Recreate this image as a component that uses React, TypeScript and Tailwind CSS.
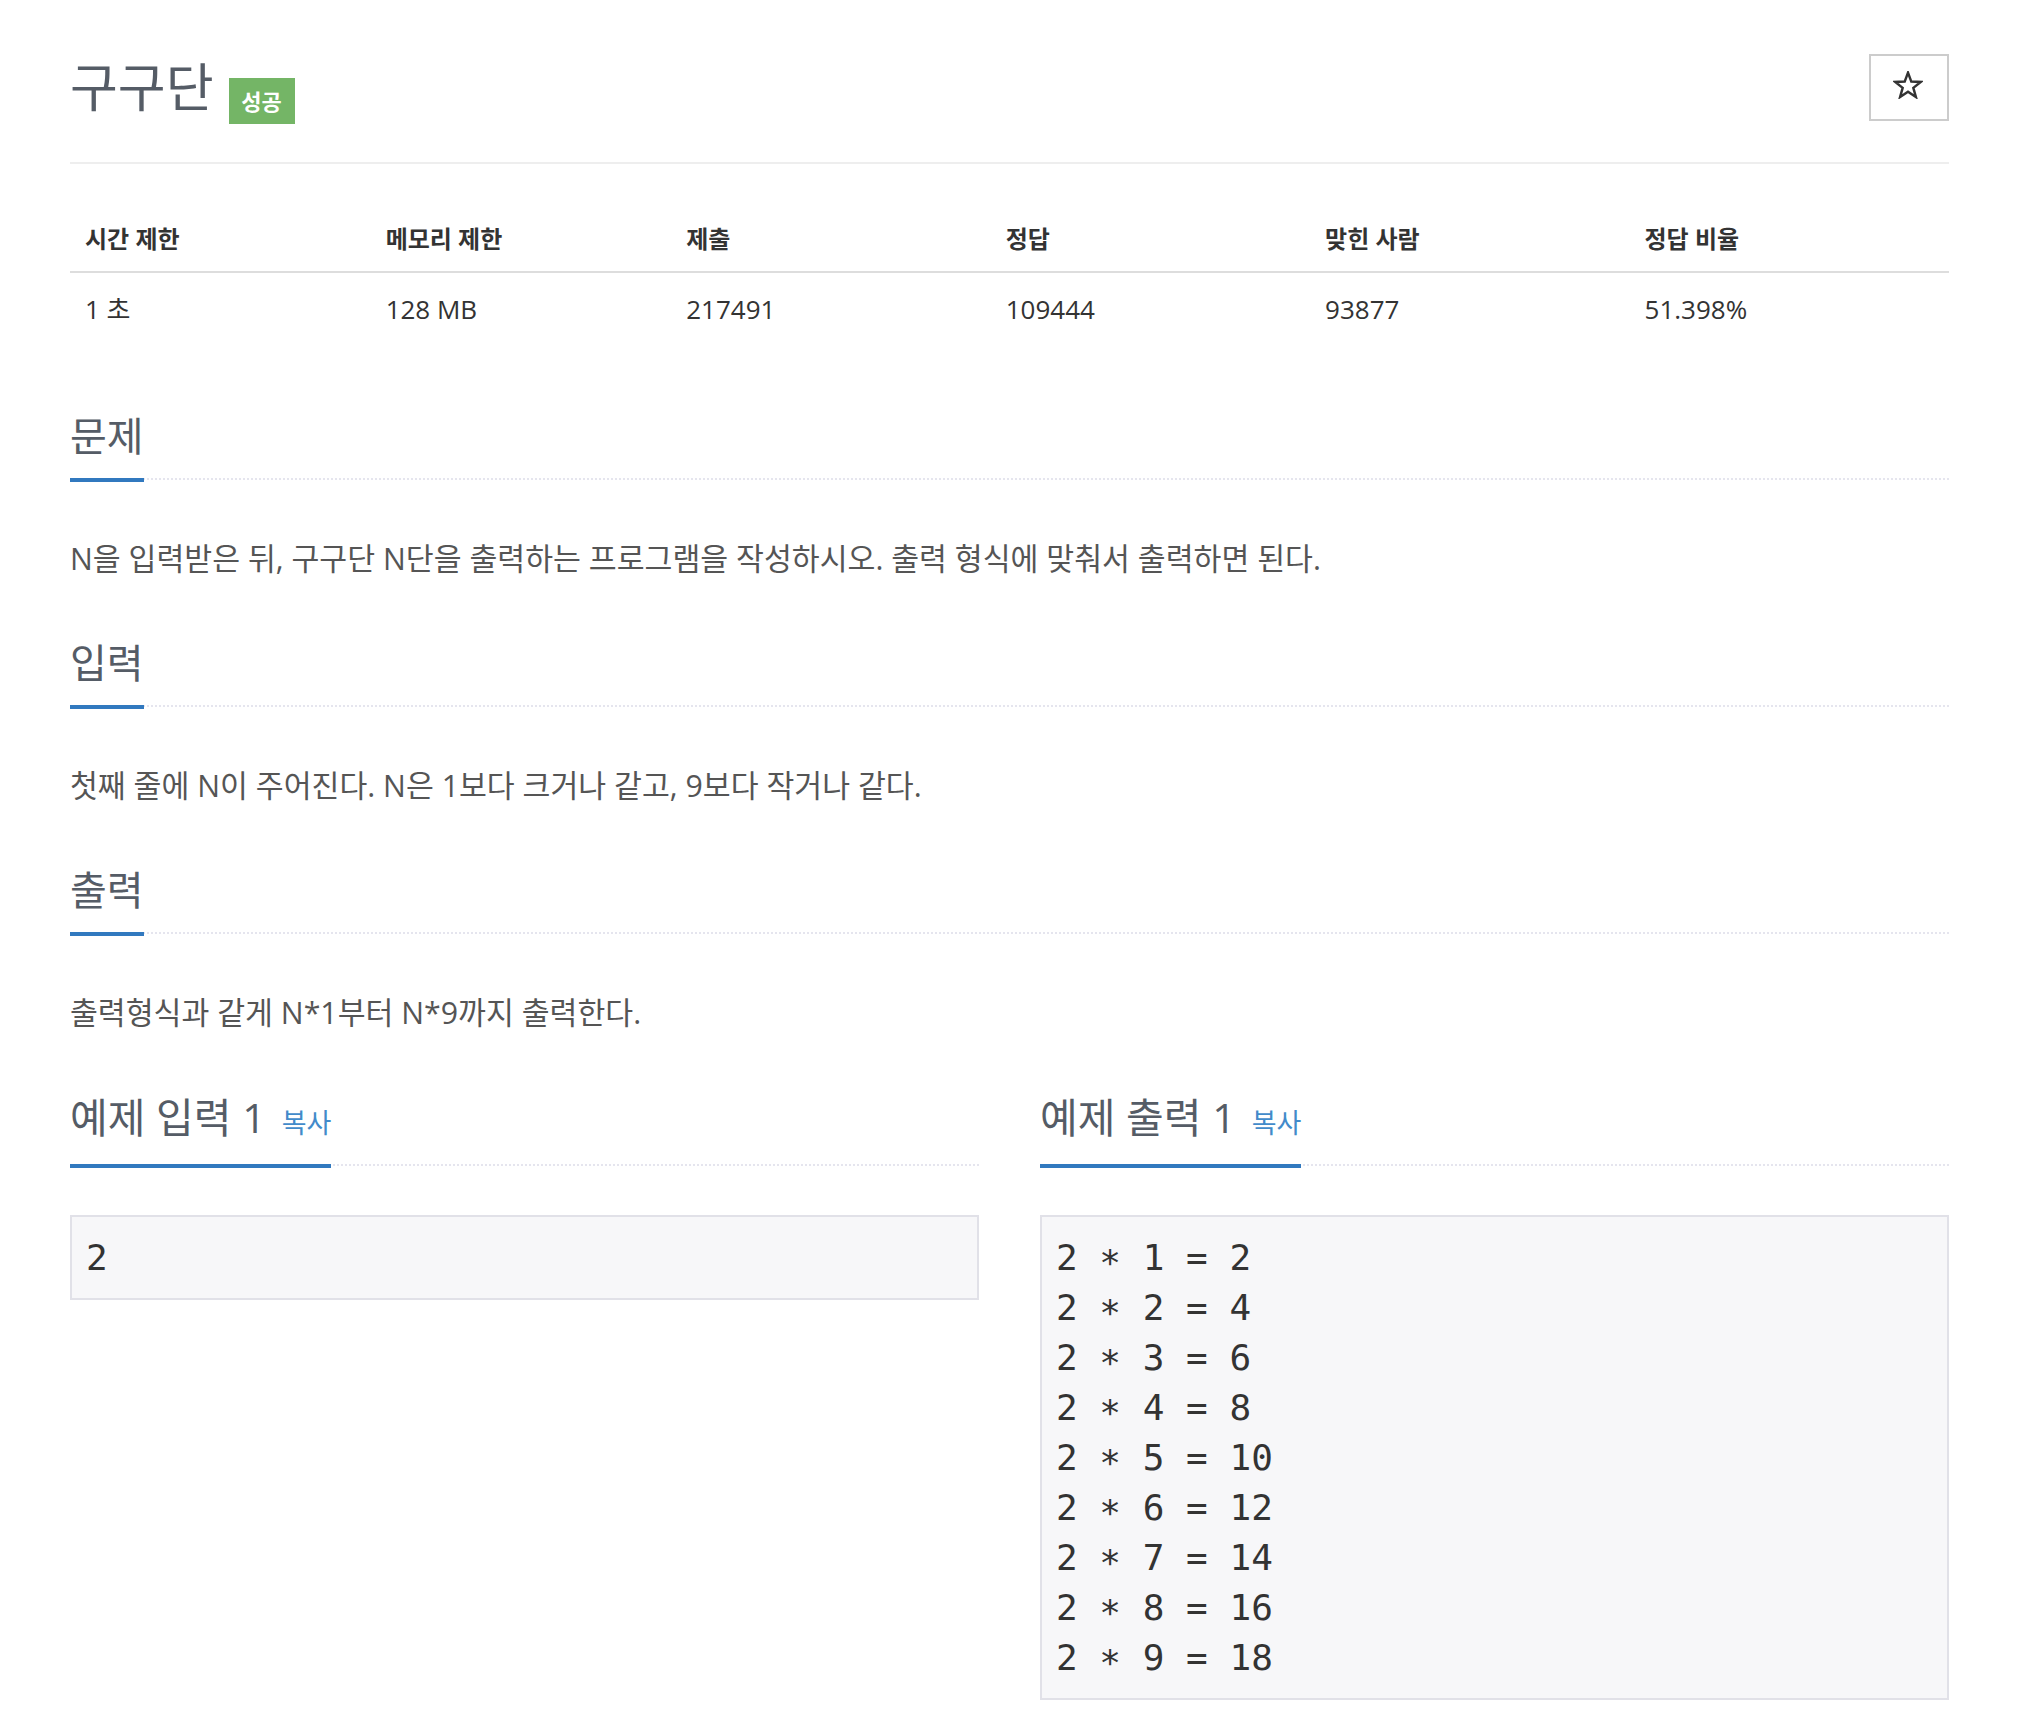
import type { ReactNode } from 'react';

// Problem page: 구구단 (BOJ style)

const infoHeaders = ['시간 제한', '메모리 제한', '제출', '정답', '맞힌 사람', '정답 비율'];
const infoValues = ['1 초', '128 MB', '217491', '109444', '93877', '51.398%'];
const colWidths = ['w-[16%]', 'w-[16%]', 'w-[17%]', 'w-[17%]', 'w-[17%]', 'w-[17%]'];

const multipliers = [1, 2, 3, 4, 5, 6, 7, 8, 9];

function StarIcon() {
  return (
    <svg width="30" height="28" viewBox="-1 -1 26 25" fill="none">
      <polygon
        points="12,0.5 14.94,8.45 23.41,8.79 16.76,14.05 19.05,22.21 12,17.5 4.95,22.21 7.24,14.05 0.59,8.79 9.06,8.45"
        stroke="#333333"
        strokeWidth="2.2"
        strokeLinejoin="miter"
      />
    </svg>
  );
}

function Section({ title, children }: { title: string; children: ReactNode }) {
  return (
    <section>
      <div className="flex border-b-2 border-dotted border-[#e5e5ee]">
        <h2 className="-mb-[4px] border-b-4 border-[#3179bf] pb-[17px] text-[40px] leading-[50px] font-normal text-[#555c66]">
          {title}
        </h2>
      </div>
      <p className="mt-[59px] mb-[59px] text-[30.3px] leading-[40px] text-[#555555]">{children}</p>
    </section>
  );
}

function Sample({ title, children }: { title: string; children: ReactNode }) {
  return (
    <div>
      <div className="flex border-b-2 border-dotted border-[#e5e5ee]">
        <h2 className="-mb-[4px] flex items-baseline border-b-4 border-[#3179bf] pb-[16px] text-[41px] leading-[50px] font-normal text-[#555c66]">
          {title}
          <span className="ml-[16px] text-[27px] text-[#428bca]">복사</span>
        </h2>
      </div>
      <pre className="m-0 mt-[49px] border-2 border-[#e1e1e8] bg-[#f7f7f9] pt-[16px] pb-[15px] px-[14px] font-['DejaVu_Sans_Mono',monospace] text-[36px] leading-[50px] text-[#333333]">
        {children}
      </pre>
    </div>
  );
}

export default function App() {
  return (
    <div className="min-h-screen bg-white font-['Open_Sans','Noto_Sans_CJK_KR',sans-serif]">
      <div className="ml-[70px] w-[1879px]">
        {/* Title */}
        <div className="flex items-start justify-between border-b-2 border-[#eeeeee] pt-[54px] pb-[38px]">
          <div className="mt-[8px] flex items-start">
            <h1 className="text-[52px] leading-[50px] font-normal text-[#555c66]">구구단</h1>
            <span className="ml-[15px] mt-[16px] flex h-[46px] w-[66px] items-center justify-center bg-[#74b566] text-[22px] font-bold text-white">
              성공
            </span>
          </div>
          <button className="flex h-[67px] w-[80px] items-center justify-center border-2 border-[#cccccc] bg-white pr-[3px] pb-[5px]">
            <StarIcon />
          </button>
        </div>

        {/* Limits */}
        <table className="mt-[43px] w-full table-fixed border-collapse">
          <thead>
            <tr className="border-b-2 border-[#dddddd]">
              {infoHeaders.map((h, i) => (
                <th
                  key={h}
                  className={`${colWidths[i]} px-[15px] py-[16px] text-left text-[24px] leading-[32px] font-bold text-[#333333]`}
                >
                  {h}
                </th>
              ))}
            </tr>
          </thead>
          <tbody>
            <tr>
              {infoValues.map((v) => (
                <td key={v} className="px-[15px] pt-[20px] pb-[8px] text-[26px] leading-[32px] text-[#333333]">
                  {v}
                </td>
              ))}
            </tr>
          </tbody>
        </table>

        <div className="mt-[78px]">
          <Section title="문제">
            N을 입력받은 뒤, 구구단 N단을 출력하는 프로그램을 작성하시오. 출력 형식에 맞춰서 출력하면 된다.
          </Section>
          <Section title="입력">첫째 줄에 N이 주어진다. N은 1보다 크거나 같고, 9보다 작거나 같다.</Section>
          <Section title="출력">출력형식과 같게 N*1부터 N*9까지 출력한다.</Section>
        </div>

        {/* Samples */}
        <div className="mt-[1px] grid grid-cols-2 items-start gap-[61px]">
          <Sample title="예제 입력 1">2</Sample>
          <Sample title="예제 출력 1">
            {multipliers.map((i) => (
              <div key={i}>
                2 <span className="relative top-[5px]">*</span> {i} = {2 * i}
              </div>
            ))}
          </Sample>
        </div>
      </div>
    </div>
  );
}
